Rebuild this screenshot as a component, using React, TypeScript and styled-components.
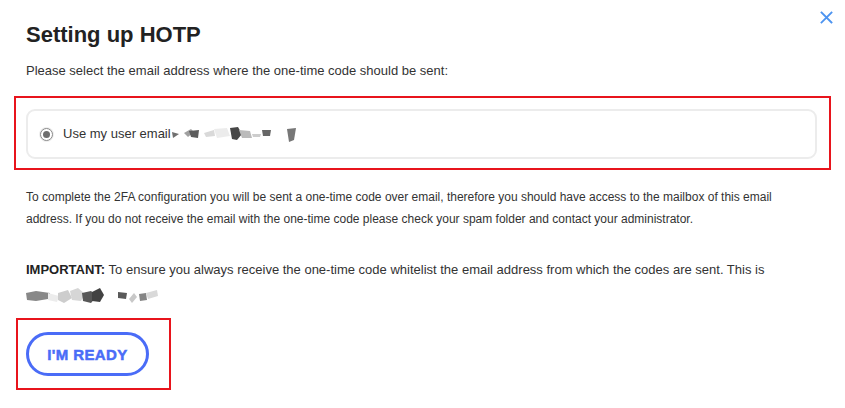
import React from "react";
import styled, { createGlobalStyle } from "styled-components";

const GlobalStyle = createGlobalStyle`
  html, body { margin: 0; padding: 0; background: #ffffff; }
  body { font-family: "Liberation Sans", Arial, sans-serif; color: #333; }
  * { box-sizing: border-box; }
`;

const Dialog = styled.div`
  position: relative;
  width: 845px;
  height: 408px;
  padding: 22px 14px 0 14px;
  background: #fff;
  display: flex;
  flex-direction: column;
`;

const CloseButton = styled.button`
  position: absolute;
  top: 10px;
  right: 12px;
  width: 14px;
  height: 14px;
  padding: 0;
  border: 0;
  background: transparent;
  cursor: pointer;
  display: flex;
  align-items: center;
  justify-content: center;
`;

const Title = styled.h1`
  margin: 0 0 0 12px;
  font-size: 22px;
  line-height: 26px;
  font-weight: 700;
  color: #222;
`;

const Subtitle = styled.p`
  margin: 15px 0 0 12px;
  font-size: 13px;
  line-height: 16px;
  color: #333;
`;

const Highlight = styled.div<{ $pad: string }>`
  border: 2px solid #e8141c;
  padding: ${(p) => p.$pad};
  display: flex;
  align-self: flex-start;
`;

const OptionBox = styled(Highlight)`
  align-self: stretch;
  margin: 17px 0 0 0;
  width: 817px;
`;

const ButtonBox = styled(Highlight)`
  margin: 9px 0 0 2px;
`;

const OptionCard = styled.label`
  flex: 1;
  height: 50px;
  border: 2px solid #ececec;
  border-radius: 9px;
  display: flex;
  align-items: center;
  padding: 0 0 0 12px;
  gap: 10px;
  font-size: 13px;
  color: #333;
  cursor: pointer;
`;

const Radio = styled.span`
  width: 13px;
  height: 13px;
  border-radius: 50%;
  border: 1px solid #8a8a8a;
  background: #fff;
  display: flex;
  align-items: center;
  justify-content: center;
  box-shadow: 0 0 0 1px #eeeeee;
  &::after {
    content: "";
    width: 7px;
    height: 7px;
    border-radius: 50%;
    background: #6e6e6e;
  }
`;

const OptionLabel = styled.span`
  display: flex;
  align-items: center;
  margin-top: -1px;
`;

const Info = styled.p`
  margin: 16px 0 0 12px;
  font-size: 12px;
  line-height: 22px;
  color: #333;
  width: 760px;
`;

const Important = styled.p`
  margin: 27px 0 0 12px;
  font-size: 13px;
  line-height: 26px;
  color: #333;
  width: 760px;
  strong { font-weight: 700; color: #222; }
`;

const ReadyButton = styled.button`
  width: 123px;
  height: 44px;
  border: 3px solid #4a6cf7;
  border-radius: 22px;
  background: #fff;
  color: #4a6cf7;
  font-family: "Liberation Sans", Arial, sans-serif;
  font-size: 15px;
  font-weight: 700;
  letter-spacing: 0.4px;
  -webkit-text-stroke: 0.5px #4a6cf7;
  text-transform: uppercase;
  cursor: pointer;
  padding: 0;
`;

const Redacted = styled.svg`
  display: inline-block;
  vertical-align: middle;
`;

const EmailBlur1 = () => (
  <Redacted width="130" height="20" viewBox="0 0 130 20">
    <polygon points="1,8 8,10 2,14" fill="#6f6f6f" />
    <polygon points="13,9 20,5 23,8 17,13" fill="#a0a0a0" />
    <polygon points="18,7 28,6 27,14 20,13" fill="#5c5c5c" />
    <polygon points="33,9 43,6 44,12 35,13" fill="#d9d9d9" />
    <polygon points="43,5 56,4 59,12 46,14" fill="#ececec" />
    <polygon points="59,4 67,3 71,10 66,16 61,15" fill="#474747" />
    <polygon points="68,6 79,7 81,14 71,14" fill="#bbbbbb" />
    <polygon points="81,10 90,10 89,13 82,13" fill="#cdcdcd" />
    <polygon points="91,6 100,6 99,12 92,12" fill="#676767" />
    <polygon points="116,5 125,4 123,16 118,18" fill="#777777" />
  </Redacted>
);

const EmailBlur2 = () => (
  <Redacted width="136" height="18" viewBox="0 0 136 18">
    <polygon points="0,5 10,3 24,5 22,11 10,13 1,12" fill="#888888" />
    <polygon points="22,5 33,8 31,14 22,12" fill="#ececec" />
    <polygon points="32,5 42,2 46,10 38,15 32,12" fill="#cdcdcd" />
    <polygon points="44,3 52,0 59,6 55,13 46,12" fill="#d6d6d6" />
    <polygon points="56,5 65,3 71,8 65,15 57,13" fill="#575757" />
    <polygon points="66,4 74,0 78,7 74,14 66,13" fill="#424242" />
    <polygon points="92,4 101,5 100,11 92,10" fill="#595959" />
    <polygon points="103,11 108,5 111,9 106,15" fill="#c8c8c8" />
    <polygon points="113,6 120,5 121,12 114,13" fill="#858585" />
    <polygon points="120,5 131,2 132,8 122,11" fill="#d9d9d9" />
  </Redacted>
);

export default function App() {
  return (
    <>
      <GlobalStyle />
      <Dialog>
        <CloseButton aria-label="Close">
          <svg width="13" height="13" viewBox="0 0 13 13">
            <path d="M1.5 1.5 L11.5 11.5 M11.5 1.5 L1.5 11.5" stroke="#4d94f0" strokeWidth="1.8" strokeLinecap="square" />
          </svg>
        </CloseButton>
        <Title>Setting up HOTP</Title>
        <Subtitle>Please select the email address where the one-time code should be sent:</Subtitle>
        <OptionBox $pad="11px 12px 9px 10px">
          <OptionCard>
            <Radio />
            <OptionLabel>
              Use my user email
              <EmailBlur1 />
            </OptionLabel>
          </OptionCard>
        </OptionBox>
        <Info>
          To complete the 2FA configuration you will be sent a one-time code over email, therefore you should have access to the mailbox of this email address. If you do not receive the email with the one-time code please check your spam folder and contact your administrator.
        </Info>
        <Important>
          <strong>IMPORTANT:</strong> To ensure you always receive the one-time code whitelist the email address from which the codes are sent. This is <br />
          <EmailBlur2 />
        </Important>
        <ButtonBox $pad="12px 20px 12px 8px">
          <ReadyButton>I'M READY</ReadyButton>
        </ButtonBox>
      </Dialog>
    </>
  );
}
